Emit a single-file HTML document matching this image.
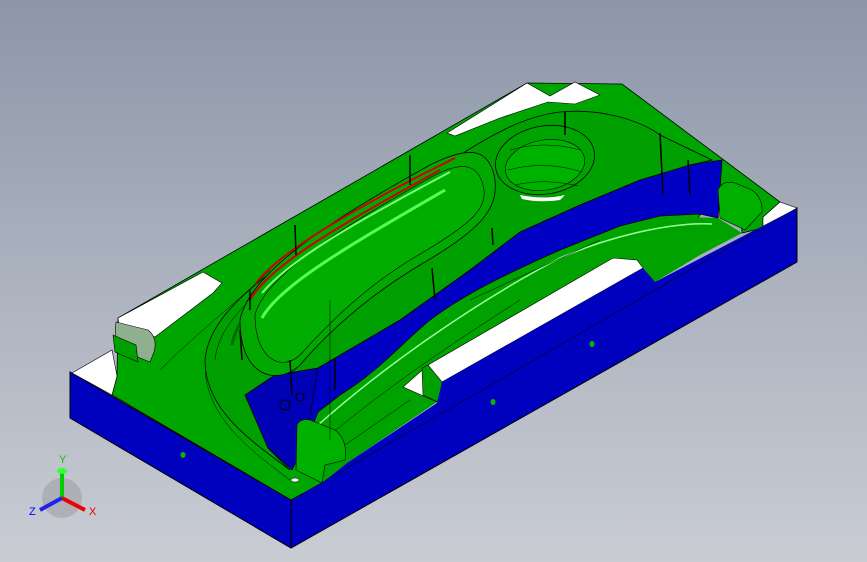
<!DOCTYPE html>
<html><head><style>
html,body{margin:0;padding:0;width:867px;height:562px;overflow:hidden}
body{background:linear-gradient(180deg,#8c96a8 0%,#a9b0bd 45%,#c9ccd3 100%)}
svg{position:absolute;left:0;top:0}
</style></head><body>
<svg width="867" height="562" viewBox="0 0 867 562" xmlns="http://www.w3.org/2000/svg" font-family="Liberation Sans, sans-serif">
<polygon points="70,372 70,418 291,548 797,262 797,208 291,500" fill="#0000bf" stroke="#000" stroke-width="1"/>
<polygon points="112,395 117,376 118,318 527,83 622,84 780,202 763,217 763,228 742,233 740,198 718,190 700,215 655,283 640,262 430,370 428,395 404,389 347,463 340,440 322,445 322,483 291,500" fill="#00a600" stroke="#000" stroke-width="0.8"/>
<polygon points="72,373 112,350 117,376 112,395" fill="#fff" stroke="#000" stroke-width="0.6"/>
<polygon points="118,318 203,272 222,283 213,293 155,337 150,335 120,332" fill="#fff" stroke="#000" stroke-width="0.6"/>
<polygon points="447,133 527,83 550,96 575,82 600,95 575,104 548,102 500,118 455,136" fill="#fff" stroke="#000" stroke-width="0.6"/>
<polygon points="763,217 780,202 797,208 763,228" fill="#fff" stroke="#000" stroke-width="0.6"/>
<path d="M116,322 L148,330 Q158,338 154,352 L150,362 L125,352 Q113,345 116,322Z" fill="#8fb08f" stroke="#000" stroke-width="0.6"/>
<path d="M113,335 L136,345 L138,362 L115,352Z" fill="#00a000" stroke="#000" stroke-width="0.6"/>
<!-- channel green base -->
<polygon points="300,445 320,412 390,370 470,292 560,252 660,216 718,218 742,233 700,255 655,282 643,268 442,382 437,402 347,463 322,483 300,470" fill="#00a200"/>
<!-- inner blue walls -->
<path d="M318,368 L400,320 L470,270 L520,232 L580,205 L640,180 L690,165 L722,160 L718,218 L700,214 L660,216 L620,226 L560,250 C520,268 470,290 430,320 C400,345 380,370 340,395 L318,412 L305,445 Z" fill="#0000c4" stroke="#000" stroke-width="0.8"/>
<polygon points="245,395 275,375 318,368 305,445 292,470 268,448" fill="#0000b5" stroke="#000" stroke-width="0.6"/>
<path d="M305,445 C330,420 350,400 340,395" fill="none"/>
<path d="M318,425 C380,370 470,305 560,258 C620,232 680,222 712,224" fill="none" stroke="#9f9" stroke-width="1.5"/>
<path d="M330,435 C390,385 450,345 520,300 M470,300 L600,240 M345,445 L410,400" fill="none" stroke="#000" stroke-width="0.5"/>
<!-- white strip -->
<polygon points="403,387 428,365 613,258 637,260 643,268 442,382 437,402" fill="#fff" stroke="#000" stroke-width="0.6"/>
<polygon points="422,368 428,365 442,382 440,403 423,395" fill="#00a000" stroke="#000" stroke-width="0.6"/>
<polygon points="291,500 322,483 347,463 437,403 442,382 643,268 655,282 797,208" fill="#0000bf"/>
<line x1="291" y1="500" x2="291" y2="548" stroke="#000" stroke-width="1"/>
<path d="M297,425 Q300,418 310,420 L335,430 Q348,440 345,460 L325,465 L322,483 L296,470 Z" fill="#00b000" stroke="#000" stroke-width="0.6"/>
<path d="M718,190 Q722,180 735,183 L752,190 Q763,198 762,212 L745,230 L720,218Z" fill="#00b000" stroke="#000" stroke-width="0.6"/>
<!-- raised island -->
<path d="M205,360 C210,300 300,250 420,180 C470,150 510,118 560,112 C600,108 640,120 660,135 L712,160 L690,165 L640,180 L580,205 L520,232 L470,270 L400,320 L318,368 L275,375 L245,395 L268,448 L290,470 C250,440 205,410 205,360Z" fill="#00a000" stroke="#000" stroke-width="0.8"/>
<path d="M215,360 C220,305 300,258 420,188" fill="none" stroke="#000" stroke-width="0.5"/>
<path d="M232,345 C240,300 300,265 410,200" fill="none" stroke="#006b00" stroke-width="3"/>
<path d="M240,320 C250,270 340,215 430,165 C470,145 490,148 495,180 C498,210 480,230 420,265 C370,295 330,330 300,365 C280,385 240,380 240,320Z" fill="#00a800" stroke="#000" stroke-width="0.8"/>
<path d="M255,315 C265,275 345,225 435,175 C465,160 480,165 484,190 C486,210 470,225 415,257 C365,287 330,322 300,355 C282,372 255,360 255,315Z" fill="#00ad00" stroke="#000" stroke-width="0.6"/>
<path d="M250,300 C270,265 340,225 440,170" fill="none" stroke="#c00" stroke-width="2"/>
<path d="M255,285 C275,255 350,210 455,158" fill="none" stroke="#c00" stroke-width="2"/>
<path d="M262,318 C280,285 350,245 445,190" fill="none" stroke="#5f5" stroke-width="3"/>
<path d="M262,293 C290,260 350,225 450,172" fill="none" stroke="#7f7" stroke-width="2"/>
<ellipse cx="545" cy="160" rx="50" ry="34" transform="rotate(-10 545 160)" fill="#00a400" stroke="#000" stroke-width="0.8"/>
<ellipse cx="545" cy="165" rx="40" ry="25" transform="rotate(-10 545 165)" fill="#00b200" stroke="#000" stroke-width="0.6"/>
<path d="M520,195 Q545,200 565,195 L560,200 Q540,203 522,199Z" fill="#fff"/>
<path d="M510,150 Q545,140 580,150 M508,170 Q545,160 582,172 M515,185 Q545,178 578,186" fill="none" stroke="#000" stroke-width="0.5"/>
<g stroke="#000" stroke-width="1.5" fill="none">
<path d="M295,225 L296,255 M410,155 L410,185 M565,112 L565,135 M660,133 L663,195 M688,160 L690,195 M432,268 L435,300 M335,358 L335,390 M290,360 L292,395 M240,330 L242,360 M250,290 L250,310 M492,228 L493,245"/>
</g>
<g stroke="#000" stroke-width="0.5" fill="none">
<path d="M330,300 L330,440 M160,370 C200,330 240,300 270,270"/>
<path d="M205,372 C210,420 250,450 290,480"/>
</g>
<circle cx="285" cy="405" r="5" fill="none" stroke="#000"/>
<circle cx="300" cy="397" r="4" fill="none" stroke="#000"/>
<ellipse cx="183" cy="455" rx="2.5" ry="3" fill="#0b0"/>
<ellipse cx="493" cy="402" rx="2.5" ry="3" fill="#0b0"/>
<ellipse cx="592" cy="344" rx="2.5" ry="3" fill="#0b0"/>
<ellipse cx="295" cy="480" rx="4" ry="2" fill="#fff" stroke="#000" stroke-width="0.5"/>
<circle cx="62" cy="498" r="20" fill="#888" opacity="0.35"/>
<path d="M62,498 L62,470" stroke="#0c0" stroke-width="4"/>
<ellipse cx="62" cy="471" rx="5" ry="3" fill="#3f3"/>
<path d="M62,498 L85,510" stroke="#e00" stroke-width="4"/>
<path d="M62,498 L40,510" stroke="#22e" stroke-width="4"/>
<text x="59" y="463" font-size="11" fill="#0c0">Y</text>
<text x="89" y="515" font-size="11" fill="#e00">X</text>
<text x="29" y="515" font-size="11" fill="#00f">Z</text>
</svg>
</body></html>
